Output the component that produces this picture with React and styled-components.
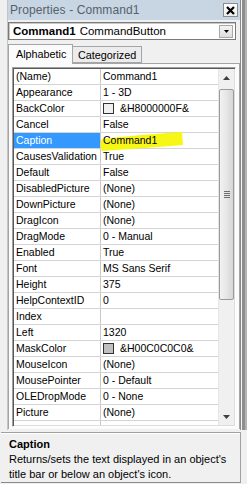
import React from 'react';
import styled, { createGlobalStyle } from 'styled-components';

const GlobalStyle = createGlobalStyle`
  html, body {
    margin: 0;
    padding: 0;
    background: #f0f0f0;
  }
  * {
    box-sizing: border-box;
  }
`;

const properties = [
  { name: '(Name)', value: 'Command1' },
  { name: 'Appearance', value: '1 - 3D' },
  { name: 'BackColor', value: '&H8000000F&', swatch: '#f0f0f0' },
  { name: 'Cancel', value: 'False' },
  { name: 'Caption', value: 'Command1', selected: true, marked: true },
  { name: 'CausesValidation', value: 'True' },
  { name: 'Default', value: 'False' },
  { name: 'DisabledPicture', value: '(None)' },
  { name: 'DownPicture', value: '(None)' },
  { name: 'DragIcon', value: '(None)' },
  { name: 'DragMode', value: '0 - Manual' },
  { name: 'Enabled', value: 'True' },
  { name: 'Font', value: 'MS Sans Serif' },
  { name: 'Height', value: '375' },
  { name: 'HelpContextID', value: '0' },
  { name: 'Index', value: '' },
  { name: 'Left', value: '1320' },
  { name: 'MaskColor', value: '&H00C0C0C0&', swatch: '#c0c0c0' },
  { name: 'MouseIcon', value: '(None)' },
  { name: 'MousePointer', value: '0 - Default' },
  { name: 'OLEDropMode', value: '0 - None' },
  { name: 'Picture', value: '(None)' },
  { name: '', value: '' },
];

const Window = styled.div`
  width: 247px;
  height: 484px;
  display: flex;
  flex-direction: column;
  font-family: 'Liberation Sans', Arial, sans-serif;
  background: #f0f0f0;
  overflow: hidden;
`;

const Upper = styled.div`
  display: flex;
  flex-direction: column;
  margin: 0 6px 0 7px;
  border-left: 1px solid #c4c4c4;
  border-right: 1px solid #8a8a8a;
  box-shadow: 1px 0 0 #f4f4f4, 4px 0 0 #8f8f8f, 6px 0 0 #b4b4b4;
  padding-bottom: 1px;
`;

const TitleBar = styled.div`
  height: 20px;
  display: flex;
  align-items: center;
  justify-content: space-between;
  background: #c8d5e3;
  padding: 0 2px 0 2px;
`;

const Title = styled.span`
  font-size: 12px;
  color: #56616d;
  letter-spacing: 0.1px;
`;

const CloseButton = styled.div`
  width: 15px;
  height: 14px;
  display: flex;
  align-items: center;
  justify-content: center;
  background: linear-gradient(#ffffff, #ececec);
  border: 1px solid #8c8c8c;
`;

const Combo = styled.div`
  height: 18px;
  margin: 2px 4px 0 0;
  display: flex;
  align-items: center;
  background: #fff;
  border: 1px solid #7a7a7a;
  box-shadow: inset 1px 1px 0 #c8c8c8;
  padding: 0 2px 0 4px;
  font-size: 11.5px;
  color: #000;
`;

const ComboText = styled.span`
  flex: 1;
  white-space: nowrap;
`;

const Bold = styled.b`
  font-weight: bold;
  margin-right: 4px;
`;

const ComboButton = styled.div`
  width: 14px;
  height: 13px;
  display: flex;
  align-items: center;
  justify-content: center;
  background: linear-gradient(#f4f4f4, #dedede);
  border: 1px solid #a8a8a8;
`;

const TabStrip = styled.div`
  display: flex;
  align-items: flex-end;
  height: 20px;
  margin-top: 3px;
  position: relative;
  z-index: 1;
`;

const Tab = styled.div`
  height: ${(p) => (p.active ? '20px' : '17px')};
  width: ${(p) => p.w}px;
  padding: ${(p) => (p.active ? '3px 0 0 7px' : '2px 0 0 5px')};
  margin-bottom: ${(p) => (p.active ? '-1px' : '0')};
  font-size: 10.8px;
  color: #000;
  background: ${(p) => (p.active ? '#fbfbfb' : '#ececec')};
  border: 1px solid #a5a5a5;
  border-bottom: ${(p) => (p.active ? 'none' : '1px solid #a5a5a5')};
  border-left: ${(p) => (p.active ? '1px solid #a5a5a5' : 'none')};
`;

const TabPanel = styled.div`
  height: 366px;
  background: #fbfbfb;
  border: 1px solid #a5a5a5;
  border-bottom: none;
  padding: 3px 3px 0 3px;
`;

const GridFrame = styled.div`
  height: 360px;
  display: flex;
  border: 1px solid;
  border-color: #a0a0a0 #ffffff #ffffff #a0a0a0;
  box-shadow: inset 1px 1px 0 #5a5a5a, inset -1px -1px 0 #dcdcdc;
  padding: 1px;
  background: #fff;
`;

const Rows = styled.div`
  flex: 1;
  overflow: hidden;
  display: flex;
  flex-direction: column;
`;

const Row = styled.div`
  display: flex;
  flex: none;
  height: 16px;
  border-bottom: 1px solid #d4d4d4;
  font-size: 10.5px;
  line-height: 15px;
  color: #000;
`;

const NameCell = styled.div`
  width: 87px;
  flex: none;
  padding-left: 2px;
  border-right: 1px solid #c8c8c8;
  background: ${(p) => (p.selected ? '#3399ff' : '#fff')};
  color: ${(p) => (p.selected ? '#fff' : '#000')};
  white-space: nowrap;
  overflow: hidden;
`;

const ValueCell = styled.div`
  flex: 1;
  position: relative;
  display: flex;
  align-items: center;
  gap: 6px;
  padding-left: 2px;
  white-space: nowrap;
`;

const ValueText = styled.span`
  position: relative;
  z-index: 1;
`;

const Swatch = styled.span`
  width: 11px;
  height: 11px;
  flex: none;
  background: ${(p) => p.color};
  border: 1px solid #333;
`;

const Marker = styled.svg`
  position: absolute;
  left: -1px;
  top: -2px;
  z-index: 0;
`;

const ScrollBar = styled.div`
  width: 16px;
  flex: none;
  display: flex;
  flex-direction: column;
  background: #f0f0f0;
  border-left: 1px solid #e6e6e6;
`;

const ArrowBox = styled.div`
  height: 17px;
  flex: none;
  display: flex;
  align-items: center;
  justify-content: center;
`;

const Track = styled.div`
  flex: 1;
  padding: 3px 0 0 0;
  display: flex;
  flex-direction: column;
`;

const Thumb = styled.div`
  height: 211px;
  border: 1px solid #9a9a9a;
  border-radius: 2px;
  background: linear-gradient(to right, #f2f2f2, #e6e6e6 50%, #d6d6d6);
  display: flex;
  align-items: center;
  justify-content: center;
`;

const Grip = styled.div`
  width: 6px;
  height: 7px;
  background: repeating-linear-gradient(#6e6e6e 0 1px, transparent 1px 2px);
`;

const Description = styled.div`
  flex: 1;
  margin: 2px 6px 3px 1px;
  border-top: 1px solid #a0a0a0;
  border-right: 1px solid #a0a0a0;
  border-bottom: 1px solid #8a8a8a;
  box-shadow: inset 0 1px 0 #fff;
  padding: 4px 0 0 8px;
  font-size: 11px;
  line-height: 15px;
  color: #000;
`;

const DescTitle = styled.div`
  font-weight: bold;
`;

const UpTriangle = () => (
  <svg width="7" height="4" viewBox="0 0 7 4">
    <path d="M0 4 L3.5 0 L7 4 Z" fill="#404040" />
  </svg>
);

const DownTriangle = () => (
  <svg width="7" height="4" viewBox="0 0 7 4">
    <path d="M0 0 L7 0 L3.5 4 Z" fill="#404040" />
  </svg>
);

export default function App() {
  return (
    <Window>
      <GlobalStyle />
      <Upper>
        <TitleBar>
          <Title>Properties - Command1</Title>
          <CloseButton>
            <svg width="9" height="9" viewBox="0 0 9 9">
              <path d="M1 1 L8 8 M8 1 L1 8" stroke="#000" strokeWidth="2.2" />
            </svg>
          </CloseButton>
        </TitleBar>
        <Combo>
          <ComboText>
            <Bold>Command1</Bold>CommandButton
          </ComboText>
          <ComboButton>
            <svg width="5" height="3" viewBox="0 0 5 3">
              <path d="M0 0 L5 0 L2.5 3 Z" fill="#000" />
            </svg>
          </ComboButton>
        </Combo>
        <TabStrip>
          <Tab active w={65}>Alphabetic</Tab>
          <Tab w={69}>Categorized</Tab>
        </TabStrip>
        <TabPanel>
          <GridFrame>
            <Rows>
              {properties.map((p, i) => (
                <Row key={i}>
                  <NameCell selected={p.selected}>{p.name}</NameCell>
                  <ValueCell>
                    {p.marked && (
                      <Marker width="84" height="21" viewBox="0 0 84 21">
                        <path
                          d="M2 8 C20 6 50 3 82 1 L83 14 C60 16 30 18 2 20 C0 16 0 11 2 8 Z"
                          fill="#f7f716"
                        />
                      </Marker>
                    )}
                    {p.swatch && <Swatch color={p.swatch} />}
                    <ValueText>{p.value}</ValueText>
                  </ValueCell>
                </Row>
              ))}
            </Rows>
            <ScrollBar>
              <ArrowBox>
                <UpTriangle />
              </ArrowBox>
              <Track>
                <Thumb>
                  <Grip />
                </Thumb>
              </Track>
              <ArrowBox>
                <DownTriangle />
              </ArrowBox>
            </ScrollBar>
          </GridFrame>
        </TabPanel>
      </Upper>
      <Description>
        <DescTitle>Caption</DescTitle>
        Returns/sets the text displayed in an object's title bar or below an
        object's icon.
      </Description>
    </Window>
  );
}
